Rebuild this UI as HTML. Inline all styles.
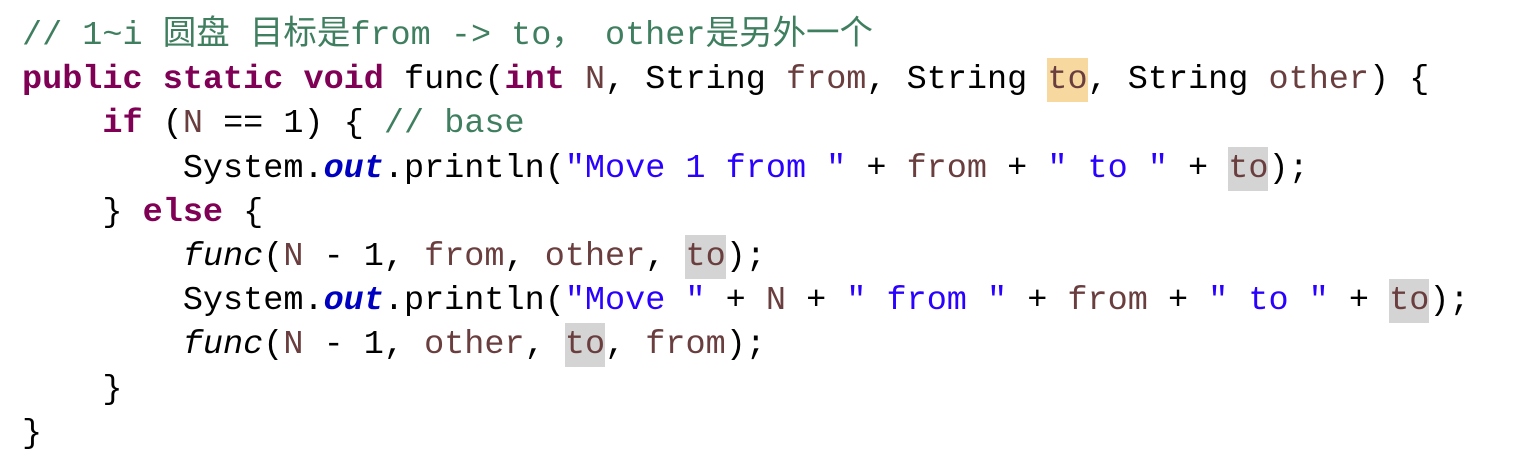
<!DOCTYPE html>
<html><head><meta charset="utf-8"><style>
html,body{margin:0;padding:0;background:#fff;width:1516px;height:464px;overflow:hidden}
pre{margin:0;position:absolute;left:22px;top:14px;font-family:"Liberation Mono","Noto Sans CJK SC",monospace;font-size:33.5px;line-height:44.2px;color:#000}
.k{color:#7f0055;font-weight:bold}
.c{color:#3f7f5f}
.s{color:#2a00ff}
.p{color:#6a3e3e}
.o{color:#0000c0;font-weight:bold;font-style:italic}
.i{font-style:italic}
.h{background:#d4d4d4;padding:3px 0}
.y{background:#f7d9a0;padding:3px 0}
</style></head><body><pre><span class="c">// 1~i 圆盘 目标是from -&gt; to， other是另外一个</span>
<span class="k">public</span> <span class="k">static</span> <span class="k">void</span> func(<span class="k">int</span> <span class="p">N</span>, String <span class="p">from</span>, String <span class="p y">to</span>, String <span class="p">other</span>) {
    <span class="k">if</span> (<span class="p">N</span> == 1) { <span class="c">// base</span>
        System.<span class="o">out</span>.println(<span class="s">"Move 1 from "</span> + <span class="p">from</span> + <span class="s">" to "</span> + <span class="p h">to</span>);
    } <span class="k">else</span> {
        <span class="i">func</span>(<span class="p">N</span> - 1, <span class="p">from</span>, <span class="p">other</span>, <span class="p h">to</span>);
        System.<span class="o">out</span>.println(<span class="s">"Move "</span> + <span class="p">N</span> + <span class="s">" from "</span> + <span class="p">from</span> + <span class="s">" to "</span> + <span class="p h">to</span>);
        <span class="i">func</span>(<span class="p">N</span> - 1, <span class="p">other</span>, <span class="p h">to</span>, <span class="p">from</span>);
    }
}</pre></body></html>
